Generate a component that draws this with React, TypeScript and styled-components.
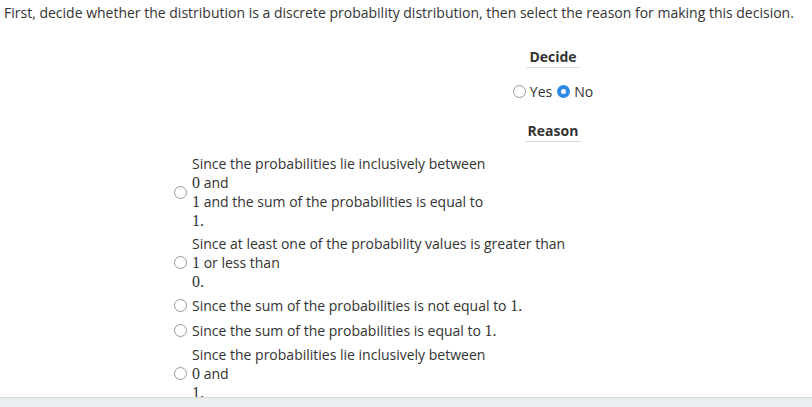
import React, { useState } from 'react';
import styled, { createGlobalStyle } from 'styled-components';

type Part = string | { math: string };

const reasons: Part[][][] = [
    [
        ['Since the probabilities lie inclusively between'],
        [{ math: '0' }, ' and'],
        [{ math: '1' }, ' and the sum of the probabilities is equal to'],
        [{ math: '1.' }],
    ],
    [
        ['Since at least one of the probability values is greater than'],
        [{ math: '1' }, ' or less than'],
        [{ math: '0.' }],
    ],
    [['Since the sum of the probabilities is not equal to ', { math: '1.' }]],
    [['Since the sum of the probabilities is equal to ', { math: '1.' }]],
    [
        ['Since the probabilities lie inclusively between'],
        [{ math: '0' }, ' and'],
        [{ math: '1.' }],
    ],
];

const App = () => {
    const [decide, setDecide] = useState<'yes' | 'no'>('no');
    const [reason, setReason] = useState<number | null>(null);

    return (
        <Page>
            <GlobalStyle />
            <Prompt>
                First, decide whether the distribution is a discrete probability distribution, then select the reason for making this decision.
            </Prompt>

            <DecideColumn>
                <Heading>Decide</Heading>
                <YesNo>
                    <Choice onClick={() => setDecide('yes')}>
                        <Radio $checked={decide === 'yes'} />
                        Yes
                    </Choice>
                    <Choice onClick={() => setDecide('no')}>
                        <Radio $checked={decide === 'no'} />
                        No
                    </Choice>
                </YesNo>
                <Heading>Reason</Heading>
            </DecideColumn>

            <ReasonList>
                {reasons.map((lines, i) => (
                    <ReasonRow key={i} $single={lines.length === 1} onClick={() => setReason(i)}>
                        <Radio $checked={reason === i} />
                        <ReasonText>
                            {lines.map((line, j) => (
                                <Line key={j}>
                                    {line.map((part, k) =>
                                        typeof part === 'string' ? part : <MathNum key={k}>{part.math}</MathNum>
                                    )}
                                </Line>
                            ))}
                        </ReasonText>
                    </ReasonRow>
                ))}
            </ReasonList>

            <Footer />
        </Page>
    );
};

export default App;

const GlobalStyle = createGlobalStyle`
  body {
    margin: 0;
    background: #fff;
    font-family: "Open Sans", "Liberation Sans", sans-serif;
    font-size: 14px;
    color: #333;
  }
`

const Page = styled.div`
  padding: 3px 0 0 4px;
  height: 404px;
  overflow: hidden;
`

const Prompt = styled.div`
  line-height: 19px;
  margin-bottom: 25px;
`

const DecideColumn = styled.div`
  margin-left: 499px;
  width: 100px;
  display: flex;
  flex-direction: column;
  align-items: center;
`

const Heading = styled.div`
  font-weight: 700;
  line-height: 19px;
  padding: 0 3px 1px;
  border-bottom: 1px solid #ddd;
`

const YesNo = styled.div`
  display: flex;
  gap: 5px;
  margin: 14px 0 20px;
  line-height: 19px;
`

const Choice = styled.label`
  display: flex;
  align-items: center;
  gap: 4px;
  cursor: pointer;
`

const Radio = styled.span<{ $checked: boolean }>`
  flex: none;
  width: 13px;
  height: 13px;
  box-sizing: border-box;
  border-radius: 50%;
  border: ${p => (p.$checked ? '4px solid #2e8ae6' : '1px solid #999')};
  background: #fff;
`

const ReasonList = styled.div`
  margin: 10px 0 0 170px;
  display: flex;
  flex-direction: column;
`

const ReasonRow = styled.label<{ $single: boolean }>`
  display: flex;
  align-items: center;
  gap: 5px;
  padding: 2px 0;
  min-height: ${p => (p.$single ? '21px' : 'auto')};
  cursor: pointer;
`

const ReasonText = styled.div`
  line-height: 19px;
`

const Line = styled.div`
  white-space: nowrap;
  height: 19px;
`

const MathNum = styled.span`
  font-family: "Liberation Serif", "DejaVu Serif", serif;
  font-size: 16px;
  line-height: 0;
`

const Footer = styled.div`
  position: fixed;
  left: 0;
  right: 0;
  bottom: 0;
  height: 9px;
  background: #e9eef1;
  border-top: 1px solid #d3d8db;
`
